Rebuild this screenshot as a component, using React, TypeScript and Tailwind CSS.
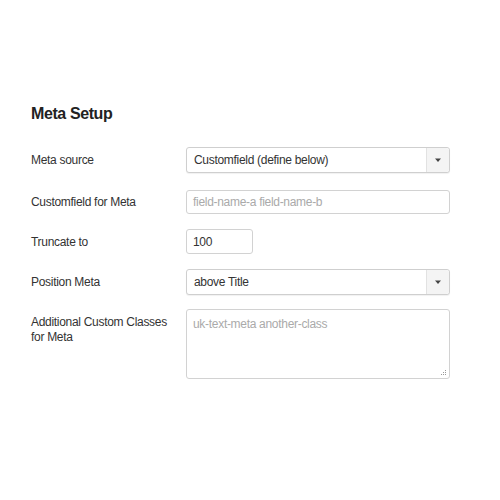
import React from "react";

const font = { fontFamily: '"Liberation Sans", Arial, sans-serif' };

function Caret() {
  return (
    <svg width="8" height="5" viewBox="0 0 8 5">
      <path d="M1 0.5 L7 0.5 L4 4 Z" fill="#444" />
    </svg>
  );
}

function Select({ value }: { value: string }) {
  return (
    <div className="flex h-[26px] w-[264px] items-stretch rounded-[3px] border border-[#cfcfcf] bg-white shadow-[0_1px_1px_rgba(0,0,0,0.06)]">
      <div className="flex flex-1 items-center pl-[7px] text-[12px] tracking-[-0.3px] text-[#333]">{value}</div>
      <div className="flex w-[23px] items-center justify-center rounded-r-[3px] border-l border-[#e2e2e2] bg-[#f4f4f4]">
        <Caret />
      </div>
    </div>
  );
}

function Row({ label, className, children }: { label: React.ReactNode; className?: string; children: React.ReactNode }) {
  return (
    <div className={"flex items-center " + (className ?? "")}>
      <div className="w-[155px] text-[12px] tracking-[-0.3px] text-[#333]">{label}</div>
      {children}
    </div>
  );
}

export default function App() {
  return (
    <div className="h-[500px] w-[500px] bg-white" style={font}>
      <div className="pl-[31px] pt-[104px]">
        <h2 className="text-[16px] font-bold leading-[20px] tracking-[-0.4px] text-[#222]">Meta Setup</h2>
        <div className="mt-[23px] flex flex-col">
          <Row label="Meta source">
            <Select value="Customfield (define below)" />
          </Row>
          <Row label="Customfield for Meta" className="mt-[17px]">
            <div className="flex h-[24px] w-[264px] items-center rounded-[3px] border border-[#d2d2d2] bg-white pl-[6px] text-[12px] tracking-[-0.3px] text-[#aaa]">
              field-name-a field-name-b
            </div>
          </Row>
          <Row label="Truncate to" className="mt-[15px]">
            <div className="flex h-[25px] w-[67px] items-center rounded-[3px] border border-[#d2d2d2] bg-white pl-[6px] text-[12px] tracking-[-0.3px] text-[#333]">
              100
            </div>
          </Row>
          <Row label="Position Meta" className="mt-[15px]">
            <Select value="above Title" />
          </Row>
          <div className="mt-[14px] flex items-start">
            <div className="w-[155px] pt-[6px] text-[12px] leading-[15px] tracking-[-0.3px] text-[#333]">
              Additional Custom Classes
              <br />
              for Meta
            </div>
            <div className="relative h-[70px] w-[264px] rounded-[3px] border border-[#d2d2d2] bg-white pl-[6px] pt-[5px] text-[12px] tracking-[-0.3px] text-[#aaa]">
              uk-text-meta another-class
              <svg className="absolute bottom-[2px] right-[2px]" width="6" height="6" viewBox="0 0 6 6">
                <rect x="4" y="0" width="1" height="1" fill="#999" />
                <rect x="2" y="2" width="1" height="1" fill="#999" />
                <rect x="4" y="2" width="1" height="1" fill="#999" />
                <rect x="0" y="4" width="1" height="1" fill="#999" />
                <rect x="2" y="4" width="1" height="1" fill="#999" />
                <rect x="4" y="4" width="1" height="1" fill="#999" />
              </svg>
            </div>
          </div>
        </div>
      </div>
    </div>
  );
}
